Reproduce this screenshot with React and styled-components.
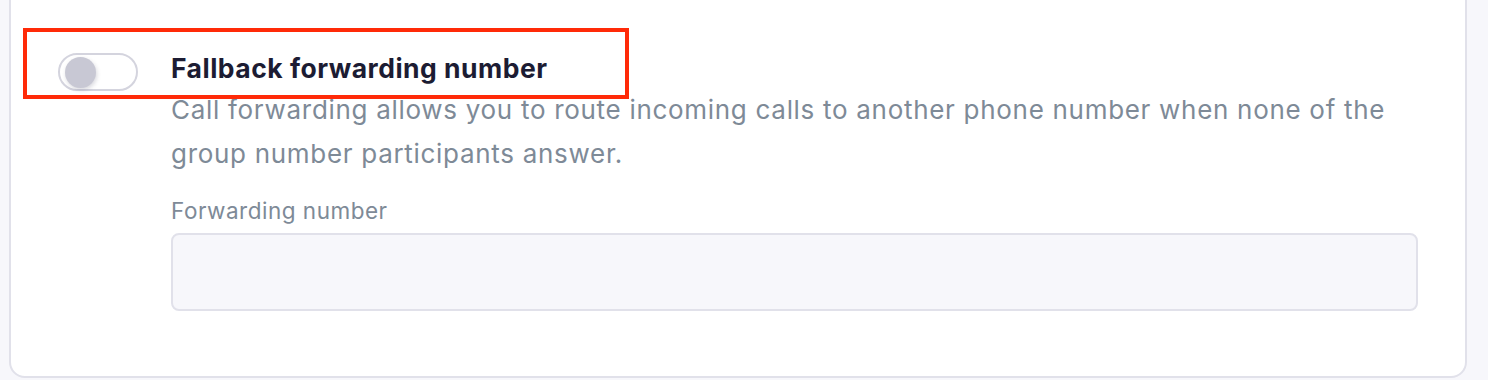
import React from "react";
import styled, { createGlobalStyle } from "styled-components";

const Global = createGlobalStyle`
  html, body { margin: 0; padding: 0; background: #f7f7fb; }
  body { font-family: Inter, "Noto Sans", sans-serif; -webkit-font-smoothing: antialiased; }
`;

const Page = styled.div`
  width: 1488px;
  height: 380px;
  overflow: hidden;
  padding: 0 21px 0 9px;
  box-sizing: border-box;
  background: #f7f7fb;
`;

const Card = styled.section`
  position: relative;
  margin-top: -40px;
  background: #ffffff;
  border: 2px solid #e1e1ea;
  border-radius: 16px;
  padding: 90px 47px 65px 47px;
  box-sizing: border-box;
  display: flex;
  gap: 33px;
  align-items: flex-start;
`;

const Track = styled.button`
  position: relative;
  flex: none;
  width: 80px;
  height: 38px;
  margin-top: 1px;
  border-radius: 19px;
  border: 2px solid #d4d4de;
  background: #ffffff;
  padding: 0 0 0 5px;
  box-sizing: border-box;
  display: flex;
  align-items: center;
  cursor: pointer;
`;

const Knob = styled.span`
  width: 31px;
  height: 31px;
  border-radius: 50%;
  background: #c8c8d4;
  box-shadow: 1px 2px 4px rgba(40, 40, 70, 0.18);
`;

const Content = styled.div`
  flex: 1;
  display: flex;
  flex-direction: column;
`;

const Title = styled.h3`
  margin: 0;
  font-size: 26.5px;
  line-height: 32px;
  font-weight: 700;
  letter-spacing: 0.5px;
  color: #1c1c33;
`;

const Description = styled.p`
  margin: 4px 0 0;
  font-size: 26px;
  line-height: 44px;
  letter-spacing: 0.7px;
  color: #7e8a97;
`;

const Label = styled.label`
  margin-top: 21px;
  font-size: 22.5px;
  line-height: 28px;
  letter-spacing: 0.5px;
  color: #7e8a97;
`;

const Input = styled.input`
  margin-top: 8px;
  height: 78px;
  border: 2px solid #e1e1ea;
  border-radius: 8px;
  background: #f7f7fb;
  box-sizing: border-box;
  font-size: 20px;
  padding: 0 16px;
  outline: none;
`;

const Highlight = styled.div`
  position: absolute;
  left: 12px;
  top: 66px;
  width: 606px;
  height: 71px;
  border: 4px solid #ff2a08;
  box-sizing: border-box;
  pointer-events: none;
`;

export default function App() {
  return (
    <Page>
      <Global />
      <Card>
        <Highlight />
        <Track aria-label="Fallback forwarding number toggle">
          <Knob />
        </Track>
        <Content>
          <Title>Fallback forwarding number</Title>
          <Description>
            Call forwarding allows you to route incoming calls to another phone number when none of the group number participants answer.
          </Description>
          <Label>Forwarding number</Label>
          <Input />
        </Content>
      </Card>
    </Page>
  );
}
